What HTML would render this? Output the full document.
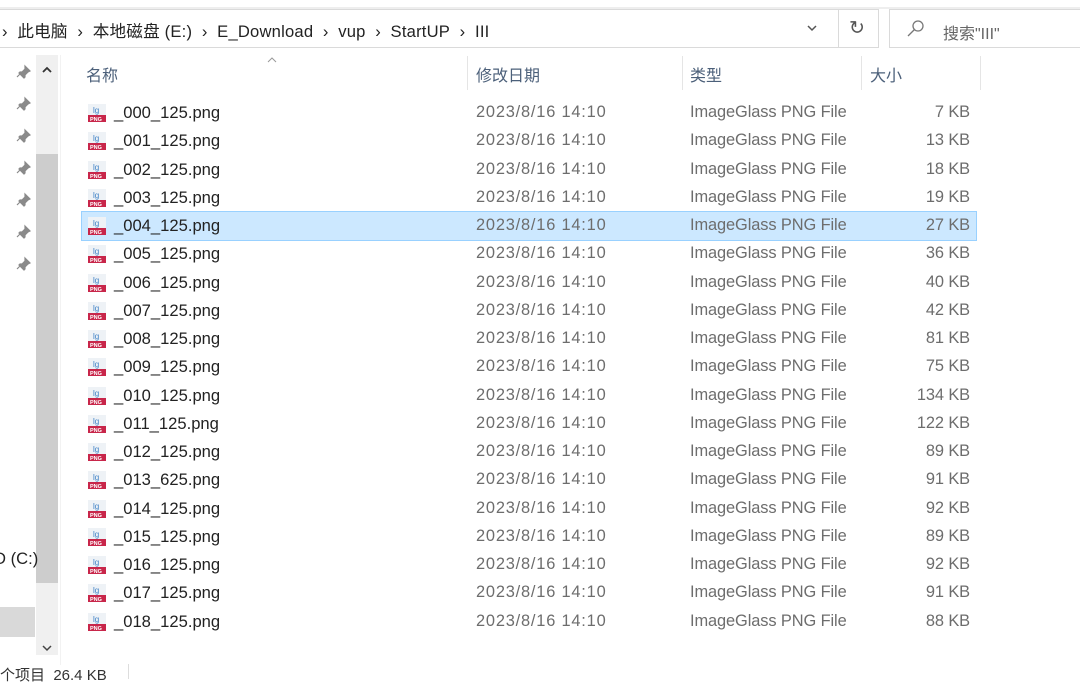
<!DOCTYPE html><html><head><meta charset="utf-8"><style>
body{margin:0;width:1080px;height:679px;overflow:hidden;background:#fff;font-family:"Liberation Sans","Noto Sans CJK SC",sans-serif;color:#333;position:relative}
.a{position:absolute;white-space:nowrap}
.t{font-size:16.6px;color:#222}
.g{color:#6d6d6d;font-size:16.4px;letter-spacing:-0.1px}
.d{letter-spacing:0.8px}
.h{font-size:16px;color:#4c607a}
.row{position:absolute;left:82px;width:894px;height:28px}
.ic{position:absolute;left:5px;top:4px;width:20px;height:20px}
</style></head><body>
<div class="a" style="left:0;top:7px;width:1080px;height:2px;background:#eee"></div>
<div class="a" style="left:-2px;top:9px;width:881px;height:39px;border:1px solid #dadada;box-sizing:border-box"></div>
<div class="a" style="left:838px;top:10px;width:1px;height:37px;background:#dadada"></div>
<div class="a" style="left:889px;top:9px;width:200px;height:39px;border:1px solid #dadada;box-sizing:border-box"></div>
<div class="a t" style="left:2px;top:18px;letter-spacing:0.2px">›&nbsp;&nbsp;此电脑&nbsp;&nbsp;›&nbsp;&nbsp;本地磁盘 (E:)&nbsp;&nbsp;›&nbsp;&nbsp;E_Download&nbsp;&nbsp;›&nbsp;&nbsp;vup&nbsp;&nbsp;›&nbsp;&nbsp;StartUP&nbsp;&nbsp;›&nbsp;&nbsp;III</div>
<svg class="a" style="left:806px;top:24px" width="12" height="8"><path d="M2 2l4 4 4-4" fill="none" stroke="#555" stroke-width="1.5"/></svg>
<div class="a" style="left:849px;top:17px;font-size:19px;color:#555">↻</div>
<svg class="a" style="left:906px;top:19px" width="20" height="20"><circle cx="12" cy="7" r="5" fill="none" stroke="#777" stroke-width="1.3"/><line x1="8.5" y1="10.5" x2="2" y2="17" stroke="#777" stroke-width="1.3"/></svg>
<div class="a" style="left:943px;top:20px;font-size:16px;color:#666">搜索"III"</div>
<div class="a" style="left:36px;top:55px;width:22px;height:600px;background:#f0f0f0"></div>
<div class="a" style="left:36px;top:154px;width:22px;height:429px;background:#cdcdcd"></div>
<svg class="a" style="left:41px;top:66px" width="12" height="8"><path d="M2 6l4-4 4 4" fill="none" stroke="#333" stroke-width="1.8"/></svg>
<svg class="a" style="left:41px;top:644px" width="12" height="8"><path d="M2 2l4 4 4-4" fill="none" stroke="#444" stroke-width="1.5"/></svg>
<div class="a" style="left:0;top:607px;width:35px;height:30px;background:#d9d9d9"></div>
<div class="a t" style="left:-6px;top:549px">D (C:)</div>
<div class="a" style="left:60px;top:55px;width:1px;height:610px;background:#f2f2f2"></div>
<svg class="a" style="left:15px;top:62px" width="20" height="210">
<g fill="#8a8a8a"><path id="p" d="M10 4l5 5-2 1-3 3 0 2-1 1-5-5 1-1 2 0 3-3z M5 12l-3 3" stroke="#8a8a8a" stroke-width="1.2"/>
<use href="#p" y="32"/><use href="#p" y="64"/><use href="#p" y="96"/><use href="#p" y="128"/><use href="#p" y="160"/><use href="#p" y="192"/></g></svg>
<svg class="a" style="left:266px;top:56px" width="12" height="8"><path d="M2 6l4-4 4 4" fill="none" stroke="#999" stroke-width="1"/></svg>
<div class="a h" style="left:86px;top:62px">名称</div>
<div class="a h" style="left:476px;top:62px">修改日期</div>
<div class="a h" style="left:690px;top:62px">类型</div>
<div class="a h" style="left:870px;top:62px">大小</div>
<div class="a" style="left:467px;top:56px;width:1px;height:34px;background:#e5e5e5"></div>
<div class="a" style="left:682px;top:56px;width:1px;height:34px;background:#e5e5e5"></div>
<div class="a" style="left:861px;top:56px;width:1px;height:34px;background:#e5e5e5"></div>
<div class="a" style="left:980px;top:56px;width:1px;height:34px;background:#e5e5e5"></div>
<div id="rows"></div>
<div class="a" style="left:0;top:664px;font-size:15px;color:#333">个项目&nbsp;&nbsp;26.4 KB</div>
<div class="a" style="left:128px;top:664px;width:1px;height:15px;background:#ddd"></div>
<script>
var s=["000_125","001_125","002_125","003_125","004_125","005_125","006_125","007_125","008_125","009_125","010_125","011_125","012_125","013_625","014_125","015_125","016_125","017_125","018_125"];
var z=[7,13,18,19,27,36,40,42,81,75,134,122,89,91,92,89,92,91,88];
var h="";
for(var i=0;i<s.length;i++){var y=99+i*28.25;
h+='<div class="row" style="top:'+y+'px;'+(i==4?'background:#cce8ff;outline:1px solid #99d1ff;':'')+'">'+
'<svg class="ic"><rect x="1" y="1" width="18" height="18" fill="#eef2f6"/><text x="6" y="10" font-size="8" fill="#3b7fc4" font-family="Liberation Sans">lg</text><rect x="1" y="12" width="18" height="7" fill="#c8264a"/><text x="3" y="18.2" font-size="5.5" fill="#fff" font-family="Liberation Sans" font-weight="bold">PNG</text></svg>'+
'<div class="a t" style="left:32px;top:4px">_'+s[i]+'.png</div>'+
'<div class="a t g d" style="left:394px;top:4px">2023/8/16 14:10</div>'+
'<div class="a t g" style="left:608px;top:4px">ImageGlass PNG File</div>'+
'<div class="a t g" style="right:6px;top:4px">'+z[i]+' KB</div></div>';}
document.getElementById("rows").innerHTML=h;
</script>
</body></html>
